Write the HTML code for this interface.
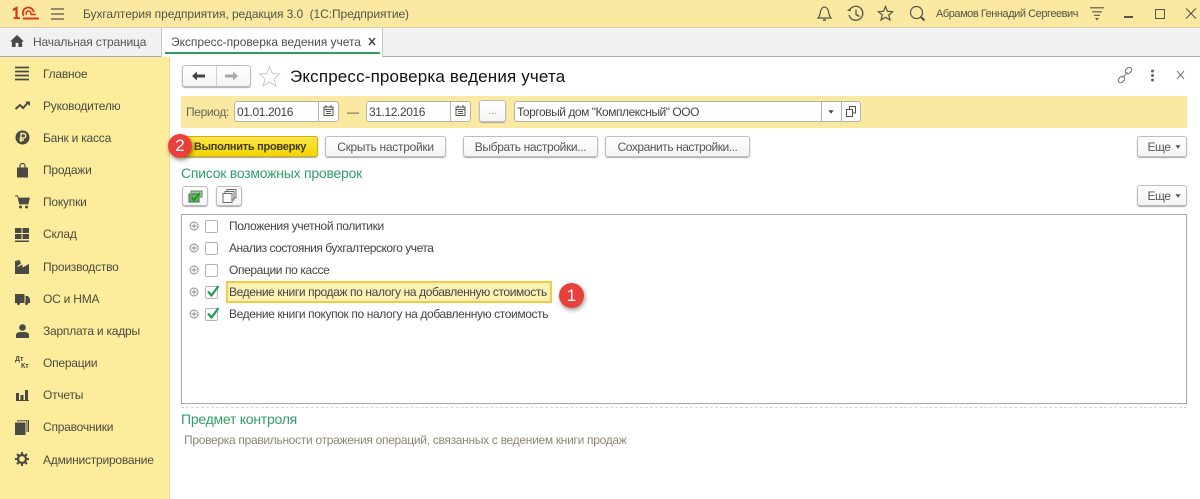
<!DOCTYPE html>
<html lang="ru"><head><meta charset="utf-8"><title>Экспресс-проверка ведения учета</title>
<style>
html,body{margin:0;padding:0;background:#fff}
#p{position:relative;width:1200px;height:499px;overflow:hidden;font-family:"Liberation Sans",sans-serif;font-size:12px;color:#4a4a44;filter:blur(.3px)}
#p div,#p span.t,#p svg{position:absolute}
.t{white-space:nowrap;line-height:14px}
.b{box-sizing:border-box;border:1px solid #bdbdbd;border-radius:3px;background:linear-gradient(#fff,#f4f4f4);box-shadow:0 1px 1px #a8a8a8;text-align:center;white-space:nowrap;color:#555;line-height:20px;font-size:12px}
.i{box-sizing:border-box;border:1px solid #b5b5a5;border-radius:3px;background:#fff}
.cb{box-sizing:border-box;width:13px;height:13px;border:1px solid #b4b4b4;border-radius:2px;background:#fff}
.m{left:43px;color:#4c4a40;font-size:12px;letter-spacing:-.22px}
.l{left:229px;color:#444;letter-spacing:-.38px}
</style></head><body><div id="p">
<!-- top bar -->
<div style="left:0;top:0;width:1200px;height:27px;background:#fbe9a1;border-bottom:1px solid #d8d0a8"></div>
<svg style="left:12px;top:6px" width="28" height="14" viewBox="0 0 28 14" fill="none" stroke="#d8301f"><path d="M1 4 L4.500 2 V12" stroke-width="2.200"/><path d="M1.500 12.200H8" stroke-width="1.600"/><path d="M11.500 10 C9.500 5 12.500 1.500 16.500 1.500 C19.500 1.500 21 3.500 22 6" stroke-width="1.700"/><path d="M14.500 9 C13.500 6.500 15 5 16.500 5 C18 5 18.800 6.500 19 8.500 H24" stroke-width="1.400"/><path d="M11 12.500H27" stroke-width="1.900"/></svg>
<svg style="left:51px;top:8px" width="14" height="12" viewBox="0 0 14 12"><path d="M0 1h13M0 6h13M0 11h13" stroke="#55534a" stroke-width="1.200"/></svg>
<span class="t" style="left:83px;top:7px;letter-spacing:-.08px;color:#55534a">Бухгалтерия предприятия, редакция 3.0&nbsp; (1С:Предприятие)</span>
<svg style="left:815px;top:5px" width="20" height="18" viewBox="0 0 20 18" fill="none" stroke="#55534a" stroke-width="1.200"><path d="M3 13 C5 11 5 9 5.500 6.500 C6 3.500 8 2 9.500 2 C11 2 13 3.500 13.500 6.500 C14 9 14 11 16 13 Z"/><path d="M8 15h3" stroke-width="1.600"/></svg>
<svg style="left:846px;top:4px" width="20" height="20" viewBox="0 0 20 20" fill="none" stroke="#55534a" stroke-width="1.300"><path d="M3.600 6 A7 7 0 1 1 3 11"/><path d="M1 6.500 L4.500 7.500 L5 3.800" fill="#55534a" stroke="none"/><path d="M10 5.500V10.500L13.500 12.500"/></svg>
<svg style="left:877px;top:5px" width="17" height="17" viewBox="0 0 17 17" fill="none" stroke="#55534a" stroke-width="1.200"><path d="M8.500 1.500 L10.500 6.300 L15.700 6.700 L11.700 10 L13 15 L8.500 12.300 L4 15 L5.300 10 L1.300 6.700 L6.500 6.300 Z"/></svg>
<svg style="left:909px;top:5px" width="17" height="17" viewBox="0 0 17 17" fill="none" stroke="#55534a" stroke-width="1.200"><circle cx="7.500" cy="7.500" r="6"/><path d="M12 12 L15.500 15.500" stroke-width="2"/></svg>
<span class="t" style="left:936px;top:7px;font-size:11px;letter-spacing:-.45px;color:#55534a">Абрамов Геннадий Сергеевич</span>
<svg style="left:1090px;top:7px" width="15" height="14" viewBox="0 0 15 14"><path d="M0 .8h14M2 4.800h10M4 8.300h6" stroke="#55534a" stroke-width="1.100"/><path d="M5 11h4l-2 2.500z" fill="#55534a"/></svg>
<div style="left:1124px;top:16px;width:9px;height:2px;background:#55534a"></div>
<div style="left:1155px;top:9px;width:10px;height:10px;box-sizing:border-box;border:1.500px solid #55534a"></div>
<svg style="left:1185px;top:8px" width="14" height="12" viewBox="0 0 14 12"><path d="M1 .5L11 10.500M11 .5L1 10.500" stroke="#55534a" stroke-width="1.100"/></svg>
<!-- tabs -->
<div style="left:0;top:28px;width:1200px;height:28px;background:#f1f1f1;border-bottom:1px solid #aaa"></div>
<svg style="left:10px;top:35px" width="14" height="12" viewBox="0 0 15 13"><path d="M7.500 0 L15 7 H13 V13 H9 V8.500 H6 V13 H2 V7 H0 Z" fill="#4a4a44"/></svg>
<span class="t" style="left:33px;top:35px;letter-spacing:-.16px;color:#555">Начальная страница</span>
<div style="left:161px;top:28px;width:222px;height:29px;background:#fff;border-left:1px solid #c8c8c8;border-right:1px solid #c8c8c8;box-sizing:border-box"></div>
<span class="t" style="left:171px;top:35px;letter-spacing:-.03px;color:#4e4e4e">Экспресс-проверка ведения учета</span>
<svg style="left:368px;top:37px" width="8" height="9" viewBox="0 0 8 9"><path d="M1 1L7 8M7 1L1 8" stroke="#444" stroke-width="1.500"/></svg>
<div style="left:165px;top:52px;width:215px;height:2px;background:#2f9e62"></div>
<!-- sidebar -->
<div style="left:0;top:57px;width:169px;height:442px;background:#fcec9c;border-right:1px solid #e8dca0"></div>
<svg style="left:15px;top:66px" width="14" height="15" viewBox="0 0 14 15"><path d="M0 1.500h14M0 5.500h14M0 9.500h14M0 13.500h14" stroke="#4a4a44" stroke-width="1.700"/></svg>
<span class="t m" style="top:67px">Главное</span>
<svg style="left:15px;top:100px" width="15" height="12" viewBox="0 0 15 12"><path d="M.5 9 L5 5 L8 8 L13 2.500" fill="none" stroke="#4a4a44" stroke-width="2"/><path d="M10 1.500h5v4.500z" fill="#4a4a44"/></svg>
<span class="t m" style="top:99px">Руководителю</span>
<svg style="left:15px;top:130px" width="15" height="15" viewBox="0 0 15 15"><circle cx="7.500" cy="7.500" r="7" fill="#4a4a44"/><path d="M6 12V3.500h2.500a2.200 2.200 0 0 1 0 4.500H4.500M4.500 10h4.500" fill="none" stroke="#fcec9c" stroke-width="1.400"/></svg>
<span class="t m" style="top:131px">Банк и касса</span>
<svg style="left:16px;top:163px" width="13" height="15" viewBox="0 0 13 15"><path d="M1 4.500H12V14.500H1Z" fill="#4a4a44"/><path d="M4 6V2.500a2.500 2 0 0 1 5 0V6" fill="none" stroke="#4a4a44" stroke-width="1.200"/></svg>
<span class="t m" style="top:163px">Продажи</span>
<svg style="left:15px;top:195px" width="15" height="14" viewBox="0 0 15 14"><path d="M0 .8h2.500L3.500 3H14.500L13 9H4.500L3 2" fill="#4a4a44" stroke="#4a4a44" stroke-width=".8"/><circle cx="5.500" cy="12" r="1.500" fill="#4a4a44"/><circle cx="11.500" cy="12" r="1.500" fill="#4a4a44"/></svg>
<span class="t m" style="top:195px">Покупки</span>
<svg style="left:15px;top:228px" width="14" height="14" viewBox="0 0 14 14" fill="#4a4a44"><rect x="0" y="0" width="6.500" height="5"/><rect x="7.500" y="0" width="6.500" height="5"/><rect x="0" y="6" width="6.500" height="5"/><rect x="7.500" y="6" width="6.500" height="5"/><rect x="0" y="12.500" width="14" height="1.500"/></svg>
<span class="t m" style="top:227px">Склад</span>
<svg style="left:15px;top:260px" width="14" height="14" viewBox="0 0 14 14"><path d="M0 14V1L4.500 0 L6 3.500 L2.500 6 V7 L7.500 4.500 V7.500 L14 4 V14Z" fill="#4a4a44"/></svg>
<span class="t m" style="top:260px">Производство</span>
<svg style="left:15px;top:294px" width="15" height="11" viewBox="0 0 15 11" fill="#4a4a44"><path d="M0 0H9.500V9H0Z M10.500 2H13L15 5V9H10.500Z"/><circle cx="3.500" cy="9.500" r="1.500"/><circle cx="11.500" cy="9.500" r="1.500"/></svg>
<span class="t m" style="top:292px">ОС и НМА</span>
<svg style="left:16px;top:324px" width="13" height="14" viewBox="0 0 13 14" fill="#4a4a44"><circle cx="6.500" cy="3.500" r="3.300"/><path d="M0 14V11Q0 8.500 4 8H9Q13 8.500 13 11V14Z"/></svg>
<span class="t m" style="top:324px">Зарплата и кадры</span>
<span class="t" style="left:15px;top:356px;font-size:7px;font-weight:bold;line-height:8px;color:#4a4a44">Дт</span>
<span class="t" style="left:21px;top:363px;font-size:7px;font-weight:bold;line-height:8px;color:#4a4a44">Кт</span>
<span class="t m" style="top:356px">Операции</span>
<svg style="left:16px;top:390px" width="13" height="11" viewBox="0 0 13 11" fill="#4a4a44"><rect x="0" y="3" width="3" height="7"/><rect x="4.500" y="5" width="3" height="5"/><rect x="9" y="0" width="3" height="10"/><rect x="0" y="10" width="13" height="1"/></svg>
<span class="t m" style="top:388px">Отчеты</span>
<svg style="left:15px;top:420px" width="14" height="15" viewBox="0 0 14 15"><rect x="0" y="2.500" width="10.500" height="12.500" fill="#4a4a44"/><path d="M2.500 1.500V.8H12V12M13.500 0V12" fill="none" stroke="#4a4a44" stroke-width="1"/></svg>
<span class="t m" style="top:420px">Справочники</span>
<svg style="left:15px;top:452px" width="14" height="14" viewBox="0 0 14 14"><circle cx="7" cy="7" r="4" fill="none" stroke="#4a4a44" stroke-width="2.200"/><path d="M7 0V3M7 11V14M0 7H3M11 7H14M2 2L4 4M10 10L12 12M12 2L10 4M4 10L2 12" stroke="#4a4a44" stroke-width="2"/></svg>
<span class="t m" style="top:453px">Администрирование</span>
<!-- title row -->
<div class="b" style="left:182px;top:65px;width:69px;height:22px"></div>
<div style="left:216px;top:66px;width:1px;height:20px;background:#d0d0d0"></div>
<svg style="left:192px;top:71px" width="14" height="10" viewBox="0 0 14 10"><path d="M0 5L5 .5V3.500H13V6.500H5V9.500Z" fill="#444"/></svg>
<svg style="left:225px;top:71px" width="14" height="10" viewBox="0 0 14 10"><path d="M13 5L8 .5V3.500H0V6.500H8V9.500Z" fill="#a8a8a8"/></svg>
<svg style="left:258px;top:65px" width="23" height="22" viewBox="0 0 23 22"><path d="M11.500 1.500L14.300 8.500L21.800 9L16 13.800L17.900 21L11.500 17L5.100 21L7 13.800L1.200 9L8.700 8.500Z" fill="none" stroke="#c9c9c9" stroke-width="1"/></svg>
<span class="t" style="left:290px;top:67px;font-size:17px;line-height:20px;color:#111;letter-spacing:.16px">Экспресс-проверка ведения учета</span>
<svg style="left:1117px;top:67px" width="16" height="16" viewBox="0 0 16 16" fill="none" stroke="#777" stroke-width="1.100"><rect x="8" y="1" width="7" height="5" rx="2.500" transform="rotate(-45 11.500 3.500)"/><rect x="1" y="10" width="7" height="5" rx="2.500" transform="rotate(-45 4.500 12.500)"/><path d="M5.500 10.500L10.500 5.500"/></svg>
<svg style="left:1150px;top:69px" width="5" height="13" viewBox="0 0 5 13" fill="#666"><circle cx="2.500" cy="2" r="1.500"/><circle cx="2.500" cy="6.500" r="1.500"/><circle cx="2.500" cy="11" r="1.500"/></svg>
<svg style="left:1176px;top:70px" width="9" height="10" viewBox="0 0 9 10"><path d="M1 1L8 9M8 1L1 9" stroke="#777" stroke-width="1"/></svg>
<!-- period bar -->
<div style="left:181px;top:96px;width:1006px;height:32px;background:#fbe9a1"></div>
<span class="t" style="left:186px;top:105px;letter-spacing:-.35px;color:#66635a">Период:</span>
<div class="i" style="left:234px;top:101px;width:105px;height:21px"></div>
<div style="left:318px;top:102px;width:1px;height:19px;background:#b5b5a5"></div>
<span class="t" style="left:237px;top:105px;letter-spacing:-.4px;color:#444">01.01.2016</span>
<svg style="left:323px;top:105px" width="11" height="11" viewBox="0 0 11 11" fill="none" stroke="#55534a"><rect x="1" y="2" width="9" height="8.500"/><path d="M1 4.500h9M3 3V0M8 3V0M3 6.500h5M3 8.500h5" stroke-width=".9"/></svg>
<span class="t" style="left:347px;top:105px;color:#444">—</span>
<div class="i" style="left:366px;top:101px;width:105px;height:21px"></div>
<div style="left:450px;top:102px;width:1px;height:19px;background:#b5b5a5"></div>
<span class="t" style="left:369px;top:105px;letter-spacing:-.4px;color:#444">31.12.2016</span>
<svg style="left:455px;top:105px" width="11" height="11" viewBox="0 0 11 11" fill="none" stroke="#55534a"><rect x="1" y="2" width="9" height="8.500"/><path d="M1 4.500h9M3 3V0M8 3V0M3 6.500h5M3 8.500h5" stroke-width=".9"/></svg>
<div class="b" style="left:479px;top:100px;width:27px;height:22px;color:#999;font-size:10px;line-height:22px">...</div>
<div class="i" style="left:514px;top:101px;width:347px;height:21px"></div>
<div style="left:821px;top:102px;width:1px;height:19px;background:#b5b5a5"></div>
<div style="left:841px;top:102px;width:1px;height:19px;background:#b5b5a5"></div>
<span class="t" style="left:517px;top:105px;letter-spacing:-.47px;color:#444">Торговый дом "Комплексный" ООО</span>
<svg style="left:828px;top:110px" width="6" height="4" viewBox="0 0 7 4"><path d="M.5 0H6.500L3.500 4Z" fill="#444"/></svg>
<svg style="left:846px;top:106px" width="10" height="11" viewBox="0 0 10 11" fill="none" stroke="#55534a" stroke-width="1"><path d="M3.500 3V.5H9.500V7H6.500"/><rect x=".5" y="3.500" width="6" height="7"/></svg>
<!-- buttons -->
<div class="b" style="left:182px;top:136px;width:136px;height:21px;background:linear-gradient(#fbe54a,#f5d400);border-color:#c9ae16;color:#3f3a10;font-weight:bold;font-size:11px;letter-spacing:-.28px">Выполнить проверку</div>
<div style="left:168px;top:134px;width:24px;height:24px;border-radius:50%;background:#e8413c;box-shadow:1px 2px 4px rgba(60,40,0,.55);color:#fff;font-size:17px;line-height:24px;text-align:center">2</div>
<div class="b" style="left:325px;top:136px;width:121px;height:21px;letter-spacing:-.28px">Скрыть настройки</div>
<div class="b" style="left:463px;top:136px;width:135px;height:21px;letter-spacing:-.35px">Выбрать настройки...</div>
<div class="b" style="left:605px;top:136px;width:145px;height:21px;letter-spacing:-.45px">Сохранить настройки...</div>
<div class="b" style="left:1137px;top:136px;width:50px;height:21px;padding-right:6px;letter-spacing:-.5px">Еще</div>
<svg style="left:1175px;top:145px" width="6" height="4" viewBox="0 0 7 4"><path d="M.5 0H6.500L3.500 4Z" fill="#555"/></svg>
<span class="t" style="left:181px;top:165px;font-size:14px;line-height:17px;letter-spacing:-.24px;color:#2f9e68">Список возможных проверок</span>
<div class="b" style="left:182px;top:186px;width:26px;height:20px"></div>
<svg style="left:188px;top:189px" width="15" height="14" viewBox="0 0 15 14"><path d="M3 4V2H14V8H12" fill="#9ecaa0" stroke="#4f8a55"/><rect x="1" y="5" width="10" height="8" fill="#6fae70" stroke="#4a6a4a"/><path d="M3.500 8.500L6 11L12 4" fill="none" stroke="#18a010" stroke-width="2"/></svg>
<div class="b" style="left:216px;top:186px;width:26px;height:20px"></div>
<svg style="left:222px;top:189px" width="15" height="14" viewBox="0 0 15 14" fill="none" stroke="#6a6a6a"><path d="M5 2.500V.5H14V9H12"/><path d="M3 4.500V2.500H12V11H10"/><rect x="1" y="4.500" width="9" height="9" fill="#fff"/></svg>
<div class="b" style="left:1137px;top:185px;width:50px;height:21px;padding-right:6px;letter-spacing:-.5px">Еще</div>
<svg style="left:1175px;top:194px" width="6" height="4" viewBox="0 0 7 4"><path d="M.5 0H6.500L3.500 4Z" fill="#555"/></svg>
<!-- list -->
<div style="left:181px;top:214px;width:1006px;height:190px;box-sizing:border-box;border:1px solid #a8a8a8"></div>
<svg style="left:189px;top:221px" width="10" height="100" viewBox="0 0 10 100" fill="none" stroke="#8a8a8a" stroke-width=".9"><g><circle cx="5" cy="5" r="4"/><path d="M2.500 5h5M5 2.500v5"/></g><g transform="translate(0 22)"><circle cx="5" cy="5" r="4"/><path d="M2.500 5h5M5 2.500v5"/></g><g transform="translate(0 44)"><circle cx="5" cy="5" r="4"/><path d="M2.500 5h5M5 2.500v5"/></g><g transform="translate(0 66)"><circle cx="5" cy="5" r="4"/><path d="M2.500 5h5M5 2.500v5"/></g><g transform="translate(0 88)"><circle cx="5" cy="5" r="4"/><path d="M2.500 5h5M5 2.500v5"/></g></svg>
<div class="cb" style="left:205px;top:220px"></div>
<div class="cb" style="left:205px;top:242px"></div>
<div class="cb" style="left:205px;top:264px"></div>
<div class="cb" style="left:205px;top:286px"></div>
<div class="cb" style="left:205px;top:308px"></div>
<svg style="left:205px;top:284px" width="15" height="15" viewBox="0 0 15 15"><path d="M3 7.500L6.500 11.500L13.500 2" fill="none" stroke="#1c9e50" stroke-width="2.200"/></svg>
<svg style="left:205px;top:306px" width="15" height="15" viewBox="0 0 15 15"><path d="M3 7.500L6.500 11.500L13.500 2" fill="none" stroke="#1c9e50" stroke-width="2.200"/></svg>
<span class="t l" style="top:219px">Положения учетной политики</span>
<span class="t l" style="top:241px;letter-spacing:-.48px">Анализ состояния бухгалтерского учета</span>
<span class="t l" style="top:263px">Операции по кассе</span>
<div style="left:226px;top:281px;width:326px;height:22px;box-sizing:border-box;background:#fbf0b4;border:2px solid #f2cb42"></div>
<span class="t l" style="top:285px">Ведение книги продаж по налогу на добавленную стоимость</span>
<span class="t l" style="top:307px">Ведение книги покупок по налогу на добавленную стоимость</span>
<div style="left:559px;top:283px;width:25px;height:25px;border-radius:50%;background:#e8413c;box-shadow:1px 2px 4px rgba(60,40,40,.5);color:#fff;font-size:17px;line-height:25px;text-align:center">1</div>
<div style="left:181px;top:407px;width:1006px;height:0;border-top:1px dashed #d8d8d8"></div>
<span class="t" style="left:181px;top:411px;font-size:14px;line-height:17px;letter-spacing:-.25px;color:#2f9e68">Предмет контроля</span>
<span class="t" style="left:184px;top:433px;letter-spacing:-.3px;color:#8f8574">Проверка правильности отражения операций, связанных с ведением книги продаж</span>
</div></body></html>
